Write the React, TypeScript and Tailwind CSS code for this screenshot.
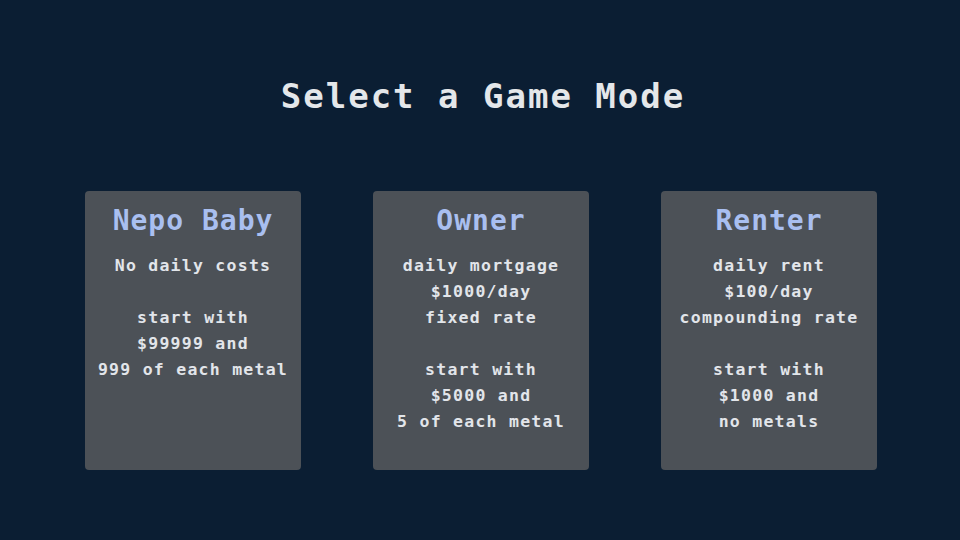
const modes = [
  {
    title: "Nepo Baby",
    lines: ["No daily costs", "", "start with", "$99999 and", "999 of each metal"],
  },
  {
    title: "Owner",
    lines: ["daily mortgage", "$1000/day", "fixed rate", "", "start with", "$5000 and", "5 of each metal"],
  },
  {
    title: "Renter",
    lines: ["daily rent", "$100/day", "compounding rate", "", "start with", "$1000 and", "no metals"],
  },
]

export default function App() {
  return (
    <div
      className="h-[540px] w-[960px] bg-[#0b1e33] overflow-hidden"
      style={{ fontFamily: '"DejaVu Sans Mono", "Liberation Mono", monospace' }}
    >
      <h1 className="pt-[76px] pl-[6px] text-center text-[34px] leading-[40px] font-bold tracking-[2px] text-[#e4e7ea]">
        Select a Game Mode
      </h1>

      <div className="mt-[75px] flex justify-center gap-[72px] pl-px">
        {modes.map((mode) => (
          <div
            key={mode.title}
            className="flex h-[279px] w-[216px] flex-col items-center rounded-[4px] bg-[#4c5157] pt-[14px] text-center cursor-pointer"
          >
            <h2 className="pl-px text-[28px] leading-[32px] font-bold tracking-[1px] text-[#a9bff0]">{mode.title}</h2>
            <div className="mt-[16px] pl-px text-[16.5px] leading-[26px] font-bold tracking-[1.25px] text-[#e2e5ea]">
              {mode.lines.map((line, i) => (
                <div key={i} className="h-[26px] whitespace-nowrap">
                  {line}
                </div>
              ))}
            </div>
          </div>
        ))}
      </div>
    </div>
  )
}
